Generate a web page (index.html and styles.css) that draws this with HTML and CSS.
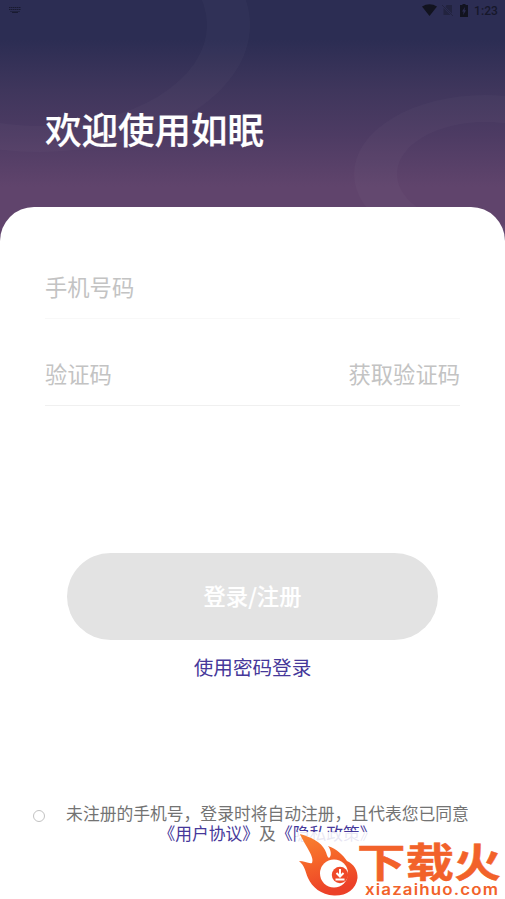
FILE: index.html
```html
<!DOCTYPE html>
<html lang="zh-CN">
<head>
<meta charset="utf-8">
<title>如眠</title>
<link rel="stylesheet" href="styles.css">
</head>
<body>
<div class="screen">
  <header class="hero">
    <svg class="rings" viewBox="0 0 505 245" aria-hidden="true">
      <path class="ring" fill-rule="evenodd" d="M-170 25a210 127 0 1 0 420 0a210 127 0 1 0-420 0zM-127 25a167 101 0 1 0 334 0a167 101 0 1 0-334 0z"/>
      <path class="ring" fill-rule="evenodd" d="M354 174a131 79 0 1 0 262 0a131 79 0 1 0-262 0zM397 174a88 52 0 1 0 176 0a88 52 0 1 0-176 0z"/>
    </svg>
    <div class="status">
      <svg class="keyboard" width="14" height="8" viewBox="0 0 14 8"><path d="M1 1.500h12M1 3.500h12" stroke-dasharray="1.500 .500"/><path d="M2 5.500h10" opacity=".6"/><path d="M4 6.500h6"/></svg>
      <div class="status-right">
        <svg class="wifi" width="15" height="12" viewBox="0 0 15 12"><path d="M0 2.500Q7.500-2 15 2.500L7.500 12z"/></svg>
        <svg class="nosim" width="12" height="12" viewBox="0 0 12 12"><path d="M4.500 1H10v8.500L3.500 3zM1.500 4l7 7h-7z"/><path class="slash" d="M0 1l11 11"/></svg>
        <svg class="battery" width="8" height="13" viewBox="0 0 8 13"><path fill-rule="evenodd" d="M2.500 0h3v1H8v12H0V1h2.500zM5 3L2 7.500h1.600L3.200 11 6 6.300H4.500z"/></svg>
        <span class="time">1:23</span>
      </div>
    </div>
    <h1>欢迎使用如眠</h1>
  </header>
  <main class="sheet">
    <div class="field phone"><span>手机号码</span></div>
    <div class="field code"><span>验证码</span><span>获取验证码</span></div>
    <div class="submit">登录/注册</div>
    <div class="switch">使用密码登录</div>
    <div class="agreement">
      <span class="radio"></span>
      <p>未注册的手机号，登录时将自动注册，且代表您已同意<br><a>《用户协议》</a>及<a>《隐私政策》</a></p>
    </div>
  </main>
  <svg class="mark" width="209" height="67" viewBox="296 832 209 67">
    <defs><linearGradient id="fire" x1="0" y1="0" x2=".3" y2="1"><stop offset="0" stop-color="#f98332"/><stop offset=".5" stop-color="#f56429"/><stop offset="1" stop-color="#ec4028"/></linearGradient></defs>
    <path class="veil" d="M296 832h209v67H296z"/>
    <path fill="url(#fire)" d="M300 834C311 837 321 842 325 850C327 854 327 857 329 858C332 856 331 850 328 846C337 849 343 855 347 861C354 864 358 871 357.500 878C356 890 346 896 334 895.500C321 895 312 887 308 878C305 871 305 866 299 861C304 861 309 864 312 863C315 857 305 846 300 834z"/>
    <circle cx="334" cy="873.500" r="14" fill="#fff"/>
    <circle cx="340" cy="875" r="8.200" fill="#ef4929"/>
    <path class="download" d="M340 869v7M336.500 873l3.500 3.500 3.500-3.500M335.500 879.500h9"/>
    <text class="brand" x="357" y="877" textLength="97" lengthAdjust="spacingAndGlyphs">下载</text>
    <text class="brand" x="454" y="877" textLength="47" lengthAdjust="spacingAndGlyphs">火</text>
    <text class="domain" x="365" y="894.500" textLength="134" lengthAdjust="spacingAndGlyphs">xiazaihuo.com</text>
  </svg>
</div>
</body>
</html>
```
FILE: styles.css
```css
* { box-sizing: border-box; }
body {
  margin: 0;
  background: #fff;
  font-family: "Noto Sans CJK SC", sans-serif;
}
.screen {
  position: relative;
  width: 505px;
  height: 899px;
  overflow: hidden;
}
.hero {
  position: relative;
  height: 245px;
  background: linear-gradient(#2c2d53 0, #2c2d53 40px, #3f365c 90px, #4d3b63 135px, #60446c 187px, #60446c 100%);
}
.rings { position: absolute; inset: 0; width: 505px; height: 245px; }
.ring { fill: #fff; fill-opacity: .024; }
.status {
  position: relative;
  height: 20px;
  padding: 0 7px 0 8px;
  display: flex;
  align-items: center;
  justify-content: space-between;
}
.keyboard { fill: none; stroke: #191a31; stroke-width: 1; }
.status-right { display: flex; align-items: center; }
.wifi { fill: #12131f; margin-right: 5px; }
.nosim { fill: #22233f; margin-right: 6px; }
.slash { stroke: #22233f; fill: none; }
.battery { fill: #12131f; margin-right: 6px; }
.time { font: 500 12px/20px Roboto, sans-serif; color: #16172a; letter-spacing: .1px; padding-top: 1px; }
h1 {
  position: relative;
  margin: 82px 0 0 45px;
  font-size: 36.500px;
  line-height: 54px;
  font-weight: 500;
  -webkit-text-stroke: .2px #fff;
  color: #fff;
}
.sheet {
  position: relative;
  height: 692px;
  margin-top: -38px;
  padding-top: 55px;
  background: #fff;
  border-radius: 34px 34px 0 0;
}
.field {
  display: flex;
  justify-content: space-between;
  margin: 0 45px;
  font-size: 22.300px;
  line-height: 48px;
  color: #c3c3c3;
}
.phone { height: 57px; border-bottom: 1px solid #f8f8f8; }
.code { height: 87px; padding-top: 30px; border-bottom: 1px solid #f0f0f0; }
.submit {
  width: 371px;
  height: 87px;
  margin: 147px auto 0 67px;
  border-radius: 44px;
  background: #e3e3e3;
  color: #fff;
  font-size: 22.300px;
  font-weight: 500;
  -webkit-text-stroke: .2px #fff;
  line-height: 85px;
  text-align: center;
}
.switch {
  margin-top: 12px;
  font-size: 19.600px;
  line-height: 30px;
  text-align: center;
  color: #46389a;
}
.agreement {
  display: flex;
  margin: 121px 0 0 33px;
}
.radio {
  width: 12px;
  height: 12px;
  margin: 7px 20.500px 0 0;
  border: 1px solid #c2c2c2;
  border-radius: 50%;
}
.agreement p {
  width: 404px;
  margin: 0;
  font-size: 16.800px;
  line-height: 20px;
  text-align: center;
  white-space: nowrap;
  color: #737373;
}
.agreement a { color: #46389a; }
.mark { position: absolute; left: 296px; top: 832px; }
.veil { fill: #fff; fill-opacity: .88; }
.download { fill: none; stroke: #fff; stroke-width: 2; }
.brand {
  font-size: 40px;
  font-weight: 700;
  fill: #f2622a;
  stroke: #f2622a;
  stroke-width: .4;
}
.domain {
  font: 600 15px Inter, sans-serif;
  letter-spacing: 1px;
  fill: #f2622a;
}
```
